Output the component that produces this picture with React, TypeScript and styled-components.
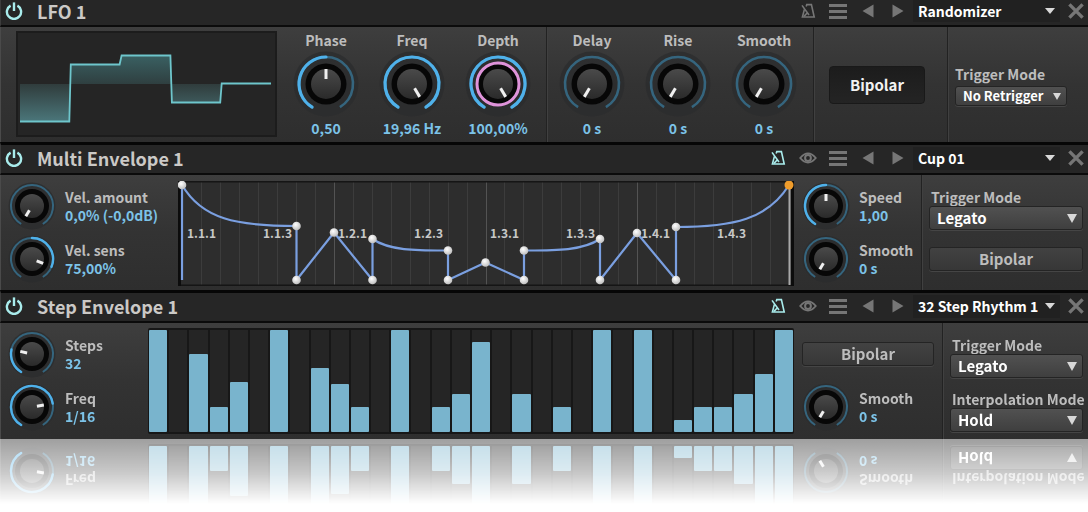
import React, { useId, useState } from "react";
import styled, { createGlobalStyle, css } from "styled-components";

const GlobalStyle = createGlobalStyle`
  * { box-sizing: border-box; }
  body {
    margin: 0;
    background: #fff;
    font-family: "Noto Sans CJK SC", "Noto Sans", sans-serif;
    font-weight: 700;
    font-size: 14px;
    line-height: 18px;
    color: #bdbdbd;
  }
  button, select, input { font: inherit; color: inherit; margin: 0; }
`;

/* ---------- page frame ---------- */

const Page = styled.main`
  min-width: 960px;
  padding-bottom: 73px;
  overflow: hidden;
`;

const Panel = styled.section`
  display: flex;
  flex-direction: column;
`;

const Header = styled.header<{ $clipped?: boolean }>`
  display: flex;
  align-items: center;
  background: #262626;
  border-left: 1px solid #3c3c3c;
  border-bottom: 2px solid #0b0b0b;
  ${(p) =>
    p.$clipped
      ? css`
          height: 27px;
          padding-bottom: 4px;
        `
      : css`
          height: 33px;
          padding-bottom: 2px;
          border-top: 3px solid #060606;
        `}
`;

const PowerButton = styled.button`
  display: flex;
  justify-content: center;
  width: 26px;
  padding: 0;
  border: 0;
  background: none;
  color: #a9ecec;
`;

const Title = styled.h2`
  flex: 1;
  margin: 0 0 0 10px;
  font-size: 18px;
  line-height: 20px;
  color: #cbc9c6;
`;

const Tool = styled.button<{ $lit?: boolean }>`
  display: flex;
  justify-content: center;
  align-items: center;
  width: 30px;
  height: 20px;
  padding: 0;
  border: 0;
  background: none;
  color: ${(p) => (p.$lit ? "#a9ecec" : "#767676")};
`;

const CloseTool = styled(Tool)`
  width: 28px;
  padding-left: 3px;
`;

const Body = styled.div<{ $mirrored?: boolean }>`
  display: flex;
  height: ${(p) => (p.$mirrored ? 116 : 115)}px;
  border-left: 1px solid #4a4a4a;
  background: linear-gradient(#3e3e3e, #333 50%, #2e2e2e);
  ${(p) =>
    p.$mirrored &&
    css`
      -webkit-box-reflect: below 0
        linear-gradient(to bottom, transparent 44%, rgba(0, 0, 0, 0.25) 70%, rgba(0, 0, 0, 0.46) 100%);
    `}
`;

const Group = styled.div<{ $w: number; $divided?: boolean }>`
  display: flex;
  flex: none;
  width: ${(p) => p.$w}px;
  ${(p) =>
    p.$divided &&
    css`
      border-left: 1px solid #222;
      box-shadow: inset 1px 0 0 #404040;
      padding-left: 2px;
    `}
`;

const ButtonGroup = styled(Group)`
  align-items: center;
  padding-left: 15px;
`;

const Stack = styled.div<{ $w: number; $inset?: number }>`
  display: flex;
  flex-direction: column;
  flex: none;
  width: ${(p) => p.$w}px;
  padding: 4px 0 0 ${(p) => p.$inset ?? 7}px;
`;

const Fields = styled.div<{ $w: number; $inset: number; $gap: number; $top?: number }>`
  display: flex;
  flex-direction: column;
  flex: none;
  gap: ${(p) => p.$gap}px;
  width: ${(p) => p.$w}px;
  padding: ${(p) => p.$top ?? 13}px ${(p) => p.$inset}px 0 7px;
  border-left: 1px solid #222;
  box-shadow: inset 1px 0 0 #404040;
`;

/* ---------- drop-downs and buttons ---------- */

const Field = styled.label<{ $small?: boolean }>`
  display: flex;
  flex-direction: column;
  gap: ${(p) => (p.$small ? 3 : 0)}px;
`;

const FieldName = styled.span<{ $small?: boolean }>`
  padding-left: ${(p) => (p.$small ? 0 : 2)}px;
  white-space: nowrap;
`;

const SelectBox = styled.span<{ $kind: "preset" | "small" | "large" }>`
  display: grid;
  align-items: center;
  color: #fff;
  > * { grid-area: 1 / 1; }
  > svg {
    justify-self: end;
    margin-right: ${(p) => (p.$kind === "preset" ? 5 : 6)}px;
    pointer-events: none;
    color: #d8d8d8;
  }
  > select {
    appearance: none;
    width: 100%;
    outline: none;
    ${(p) =>
      p.$kind === "preset"
        ? css`
            height: 23px;
            padding: 0 0 0 5px;
            border: 0;
            background: #212121;
          `
        : css`
            height: ${p.$kind === "small" ? 20 : 24}px;
            padding: 0 0 0 7px;
            border: 1px solid #242424;
            border-radius: 3px;
            background: linear-gradient(#515151, #3f3f3f);
            box-shadow: 0 1px 0 #454545;
            font-size: ${p.$kind === "small" ? 13 : 15}px;
          `}
  }
`;

const PresetBox = styled.div`
  width: 147px;
`;

const Push = styled.button<{ $on?: boolean }>`
  padding: 0;
  ${(p) =>
    p.$on
      ? css`
          width: 96px;
          height: 38px;
          border: 1px solid #191919;
          border-radius: 4px;
          background: linear-gradient(#1c1c1c, #242424);
          color: #f2f2f2;
          font-size: 15px;
        `
      : css`
          width: 100%;
          height: 24px;
          border: 1px solid #242424;
          border-radius: 3px;
          background: linear-gradient(#424242, #373737);
          box-shadow: 0 1px 0 #454545;
          font-size: 15px;
        `}
`;

const PushSlot = styled.div`
  display: flex;
  align-items: center;
  height: 53px;
  padding-right: 8px;
`;

/* ---------- knobs ---------- */

const BigKnob = styled.label`
  display: flex;
  flex-direction: column;
  align-items: center;
  width: 86px;
  padding-top: 2px;
  line-height: 22px;
`;

const SmallKnob = styled.label`
  display: flex;
  align-items: center;
  gap: 9px;
  height: 53px;
  white-space: nowrap;
`;

const KnobText = styled.span`
  display: flex;
  flex-direction: column;
`;

const Value = styled.output`
  color: #7cc3e8;
`;

const Dial = styled.span`
  position: relative;
  display: flex;
  > input {
    position: absolute;
    inset: 0;
    width: 100%;
    height: 100%;
    opacity: 0;
  }
`;

const SWEEP = 149;

function arc(c: number, r: number, from: number, to: number) {
  const at = (deg: number) => {
    const a = (deg * Math.PI) / 180;
    return `${(c + r * Math.sin(a)).toFixed(2)} ${(c - r * Math.cos(a)).toFixed(2)}`;
  };
  return `M${at(from)}A${r} ${r} 0 ${to - from > 180 ? 1 : 0} 1 ${at(to)}`;
}

type KnobProps = {
  name: string;
  text: string;
  value: number;
  from?: number;
  big?: boolean;
  ring?: boolean;
};

function Knob({ name, text, value, from = 0, big, ring }: KnobProps) {
  const [v, setV] = useState(value);
  const id = useId();
  const size = big ? 66 : 48;
  const c = size / 2;
  const r = big ? 27 : 21;
  const cap = big ? 15 : 12;
  const deg = (x: number) => -SWEEP + 2 * SWEEP * x;
  const [a, b] = [deg(Math.min(from, v)), deg(Math.max(from, v))];
  const dial = (
    <Dial>
      <svg width={size} height={size} aria-hidden="true">
        <defs>
          <linearGradient id={id} x1="0" y1="0" x2="0" y2="1">
            <stop offset="0" stopColor="#4a4a4a" />
            <stop offset="1" stopColor="#2a2a2a" />
          </linearGradient>
        </defs>
        <circle cx={c} cy={c} r={c - 0.5} fill="#2b2c2d" opacity="0.75" />
        <circle cx={c} cy={c} r={big ? 20.5 : 17} fill="#070707" />
        <circle cx={c} cy={c} r={cap} fill={`url(#${id})`} />
        <path d={arc(c, r, -SWEEP, SWEEP)} fill="none" stroke="#35657e" strokeWidth={big ? 2.6 : 2} />
        {b > a && (
          <path d={arc(c, r, a, b)} fill="none" stroke="#4fb1ea" strokeWidth={big ? 3.2 : 2.4} strokeLinecap="round" />
        )}
        {ring && <circle cx={c} cy={c} r="21" fill="none" stroke="#df93da" strokeWidth="3" />}
        <path
          d={big ? `M${c} ${c - 5}V${c - 15}` : `M${c} ${c - 5}V${c - 12}`}
          stroke="#f0f0f0"
          strokeWidth="3"
          transform={`rotate(${deg(v)} ${c} ${c})`}
        />
      </svg>
      <input
        type="range"
        min="0"
        max="1"
        step="0.001"
        aria-label={name}
        value={v}
        onChange={(e) => setV(Number(e.target.value))}
      />
    </Dial>
  );
  return big ? (
    <BigKnob>
      <span>{name}</span>
      {dial}
      <Value>{text}</Value>
    </BigKnob>
  ) : (
    <SmallKnob>
      {dial}
      <KnobText>
        <span>{name}</span>
        <Value>{text}</Value>
      </KnobText>
    </SmallKnob>
  );
}

/* ---------- icons ---------- */

const PowerIcon = () => (
  <svg width="18" height="18" fill="none" stroke="currentColor" strokeWidth="2.4" aria-hidden="true">
    <path d="M5.6 3.6A7.1 7.1 0 1 0 12.4 3.6" />
    <path d="M9 0.4V9" />
  </svg>
);

const MetronomeIcon = () => (
  <svg width="16" height="16" fill="none" stroke="currentColor" strokeWidth="1.6" aria-hidden="true">
    <path d="M4.4 6.4L2.4 14H14.2L11.4 1.6H6.8L6.2 3.4" />
    <path d="M2 2.4L9 12M4 13.4L7.4 9.8" />
  </svg>
);

const EyeIcon = () => (
  <svg width="18" height="14" aria-hidden="true">
    <path d="M1.2 7Q9 -2.2 16.8 7Q9 16.2 1.2 7Z" fill="none" stroke="currentColor" strokeWidth="1.8" />
    <circle cx="9" cy="7" r="2.9" fill="none" stroke="currentColor" strokeWidth="2" />
  </svg>
);

const ListIcon = () => (
  <svg width="18" height="16" stroke="currentColor" strokeWidth="3" aria-hidden="true">
    <path d="M0 2.5H18M0 8.5H18M0 14.5H18" />
  </svg>
);

const PrevIcon = () => (
  <svg width="12" height="14" fill="currentColor" aria-hidden="true">
    <path d="M11.5 0.5V13.5L0.5 7Z" />
  </svg>
);

const NextIcon = () => (
  <svg width="12" height="14" fill="currentColor" aria-hidden="true">
    <path d="M0.5 0.5V13.5L11.5 7Z" />
  </svg>
);

const CloseIcon = () => (
  <svg width="16" height="16" stroke="currentColor" strokeWidth="3.4" aria-hidden="true">
    <path d="M1.4 1.4L14.6 14.6M14.6 1.4L1.4 14.6" />
  </svg>
);

const DownIcon = ({ w, h }: { w: number; h: number }) => (
  <svg width={w} height={h} fill="currentColor" aria-hidden="true">
    <path d={`M0 0H${w}L${w / 2} ${h}Z`} />
  </svg>
);

/* ---------- shared pieces ---------- */

function PanelHeader({
  title,
  preset,
  clipped,
  eye,
}: {
  title: string;
  preset: string;
  clipped?: boolean;
  eye?: boolean;
}) {
  return (
    <Header $clipped={clipped}>
      <PowerButton aria-label={`${title} power`}>
        <PowerIcon />
      </PowerButton>
      <Title>{title}</Title>
      <Tool aria-label="Sync" $lit={eye}>
        <MetronomeIcon />
      </Tool>
      {eye && (
        <Tool aria-label="Show">
          <EyeIcon />
        </Tool>
      )}
      <Tool aria-label="Preset list">
        <ListIcon />
      </Tool>
      <Tool aria-label="Previous preset">
        <PrevIcon />
      </Tool>
      <Tool aria-label="Next preset">
        <NextIcon />
      </Tool>
      <PresetBox>
        <SelectBox $kind="preset">
          <select aria-label={`${title} preset`}>
            <option>{preset}</option>
          </select>
          <DownIcon w={10} h={6} />
        </SelectBox>
      </PresetBox>
      <CloseTool aria-label={`Remove ${title}`}>
        <CloseIcon />
      </CloseTool>
    </Header>
  );
}

function Choice({ name, value, small }: { name: string; value: string; small?: boolean }) {
  return (
    <Field $small={small}>
      <FieldName $small={small}>{name}</FieldName>
      <SelectBox $kind={small ? "small" : "large"}>
        <select>
          <option>{value}</option>
        </select>
        <DownIcon w={small ? 8 : 10} h={small ? 7 : 9} />
      </SelectBox>
    </Field>
  );
}

/* ---------- displays ---------- */

const Monitor = styled.div`
  flex: 1;
  margin: 4px 6px 5px 15px;
  border: 2px solid #1c1c1c;
  background: #252525;
  > svg { display: block; width: 100%; height: 100%; }
`;

const WAVE =
  "M2 88.5H51.5L53 31.5H102L104 22.5H153L154.5 69.5H203L204.5 50.5H254";

const Waveform = () => (
  <Monitor>
    <svg viewBox="0 0 258 102" preserveAspectRatio="none" role="img" aria-label="LFO shape">
      <defs>
        <linearGradient id="up" x1="0" y1="22" x2="0" y2="51" gradientUnits="userSpaceOnUse">
          <stop offset="0" stopColor="#3a6163" />
          <stop offset="1" stopColor="#2f3f40" />
        </linearGradient>
        <linearGradient id="down" x1="0" y1="51" x2="0" y2="89" gradientUnits="userSpaceOnUse">
          <stop offset="0" stopColor="#303c3c" />
          <stop offset="1" stopColor="#4b777b" />
        </linearGradient>
      </defs>
      <path d="M2 51V88.5H51.5L52.5 51Z" fill="url(#down)" />
      <path d="M52.5 51L53 31.5H102L104 22.5H153L154 51Z" fill="url(#up)" />
      <path d="M154 51L154.5 69.5H203L204.5 51Z" fill="url(#down)" />
      <path d={WAVE} fill="none" stroke="#6ec6cc" strokeWidth="1.8" />
    </svg>
  </Monitor>
);

const Graph = styled.div`
  flex: 1;
  margin: 6px 5px 4px 0;
  background: #2d2d2d;
  > svg { display: block; width: 100%; height: 100%; }
`;

const BarLabel = styled.text`
  font-size: 12px;
  fill: #c8c8c8;
`;

const CURVE =
  "M4 99V4C24 38 58 45 118.500 45V99L156 51.500L194.500 99V58C212 70 240 69.500 270 69.500V99L307.500 81.500L346 99V69.500C376 69.500 404 70 422 58V99L459 52L498 99V46C556 46 590 38 611 4";

const NODES: [number, number][] = [
  [4, 4], [118.5, 45], [118.5, 99], [156, 51.5], [194.5, 58], [194.5, 99], [270, 69.5], [270, 99],
  [307.5, 81.5], [346, 69.5], [346, 99], [422, 58], [422, 99], [459, 52], [498, 46], [498, 99],
];

const MARKS: [number, string][] = [
  [9, "1.1.1"], [85, "1.1.3"], [160, "1.2.1"], [236, "1.2.3"],
  [312, "1.3.1"], [388, "1.3.3"], [463, "1.4.1"], [539, "1.4.3"],
];

const Envelope = () => (
  <Graph>
    <svg viewBox="0 0 616 105" role="img" aria-label="Envelope curve">
      <defs>
        <radialGradient id="node" cx="0.4" cy="0.35" r="0.7">
          <stop offset="0" stopColor="#fff" />
          <stop offset="1" stopColor="#bbb" />
        </radialGradient>
      </defs>
      {Array.from({ length: 31 }, (_, i) => i + 1).map((i) => (
        <path
          key={i}
          d={`M${4 + Math.round(i * 18.97)}.5 0V105`}
          stroke={i % 8 === 0 ? "#535353" : "#3c3c3c"}
        />
      ))}
      <path d="M0 0H616V105H0Z" fill="none" stroke="#151515" strokeWidth="3" />
      <path d="M1.500 0V105M614.500 0V105" stroke="#0c0c0c" strokeWidth="3" />
      <path d="M611.500 6V104" stroke="#a8a8a8" strokeWidth="2" />
      {MARKS.map(([x, t]) => (
        <BarLabel key={t} x={x} y={57}>
          {t}
        </BarLabel>
      ))}
      <path d={CURVE} fill="none" stroke="#7a9fe0" strokeWidth="2.2" strokeLinejoin="round" />
      {NODES.map(([x, y]) => (
        <circle key={`${x}-${y}`} cx={x} cy={y} r="4.3" fill="url(#node)" />
      ))}
      <circle cx="611" cy="4" r="4.5" fill="#ee9c2c" />
    </svg>
  </Graph>
);

const Steps = styled.div`
  display: flex;
  flex: 1;
  gap: 2px;
  margin: 5px 7px 5px 0;
  padding: 2px 1px;
  border-radius: 2px;
  background: #171717;
`;

const Slot = styled.div`
  display: flex;
  flex: 1;
  align-items: flex-end;
  background: #252525;
`;

const Bar = styled.div`
  width: 100%;
  border-radius: 1px;
  background: #79b4cd;
`;

const LEVELS = [
  100, 0, 76, 25, 49, 0, 100, 0, 63, 47, 25, 0, 100, 0, 25, 37, 88, 0, 37, 0, 25, 0, 100, 0, 100, 0,
  12, 25, 25, 37, 57, 100,
];

const StepBars = () => (
  <Steps role="img" aria-label="Step levels">
    {LEVELS.map((level, i) => (
      <Slot key={i}>
        <Bar style={{ height: `${level}%` }} />
      </Slot>
    ))}
  </Steps>
);

/* ---------- app ---------- */

export default function App() {
  return (
    <>
      <GlobalStyle />
      <Page>
        <Panel>
          <PanelHeader title="LFO 1" preset="Randomizer" clipped />
          <Body>
            <Waveform />
            <Group $w={263}>
              <Knob big name="Phase" text="0,50" value={0.5} />
              <Knob big name="Freq" text="19,96 Hz" value={1} />
              <Knob big name="Depth" text="100,00%" value={1} ring />
            </Group>
            <Group $w={267} $divided>
              <Knob big name="Delay" text="0 s" value={0} />
              <Knob big name="Rise" text="0 s" value={0} />
              <Knob big name="Smooth" text="0 s" value={0} />
            </Group>
            <ButtonGroup $w={134} $divided>
              <Push $on aria-pressed="true">Bipolar</Push>
            </ButtonGroup>
            <Fields $w={141} $inset={21} $gap={0} $top={38}>
              <Choice small name="Trigger Mode" value="No Retrigger" />
            </Fields>
          </Body>
        </Panel>

        <Panel>
          <PanelHeader title="Multi Envelope 1" preset="Cup 01" eye />
          <Body>
            <Stack $w={177}>
              <Knob name="Vel. amount" text="0,0% (-0,0dB)" value={0} />
              <Knob name="Vel. sens" text="75,00%" value={0.875} from={0.5} />
            </Stack>
            <Envelope />
            <Stack $w={122} $inset={3}>
              <Knob name="Speed" text="1,00" value={0.5} />
              <Knob name="Smooth" text="0 s" value={0} />
            </Stack>
            <Fields $w={167} $inset={5} $gap={17}>
              <Choice name="Trigger Mode" value="Legato" />
              <Push>Bipolar</Push>
            </Fields>
          </Body>
        </Panel>

        <Panel>
          <PanelHeader title="Step Envelope 1" preset="32 Step Rhythm 1" eye />
          <Body $mirrored>
            <Stack $w={147}>
              <Knob name="Steps" text="32" value={0.24} />
              <Knob name="Freq" text="1/16" value={0.77} />
            </Stack>
            <StepBars />
            <Stack $w={141} $inset={1}>
              <PushSlot>
                <Push>Bipolar</Push>
              </PushSlot>
              <Knob name="Smooth" text="0 s" value={0} />
            </Stack>
            <Fields $w={146} $inset={5} $gap={12} $top={13}>
              <Choice name="Trigger Mode" value="Legato" />
              <Choice name="Interpolation Mode" value="Hold" />
            </Fields>
          </Body>
        </Panel>
      </Page>
    </>
  );
}
